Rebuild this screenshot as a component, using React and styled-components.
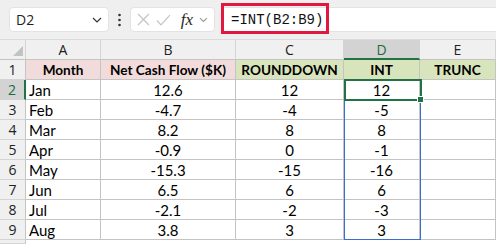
import React from 'react';
import styled, { createGlobalStyle } from 'styled-components';

const GlobalStyle = createGlobalStyle`
  html, body {
    margin: 0;
    padding: 0;
    background: #ffffff;
    overflow: hidden;
  }
`;

const Page = styled.div`
  width: 496px;
  height: 244px;
  display: flex;
  flex-direction: column;
  background: #ffffff;
`;

const TopBar = styled.div`
  height: 40px;
  flex: none;
  box-sizing: border-box;
  display: flex;
  align-items: center;
  padding-left: 9px;
  background: #efefef;
  border-bottom: 1px solid #dadada;
`;

const RoundBox = styled.div`
  height: 25px;
  box-sizing: border-box;
  background: #ffffff;
  border: 1px solid #e3e3e3;
  border-radius: 4px;
  display: flex;
  align-items: center;
`;

const NameBox = styled(RoundBox)`
  width: 100px;
  justify-content: space-between;
  padding: 0 6px 0 6px;
  font-family: "Open Sans", "Noto Sans", sans-serif;
  font-size: 14px;
  color: #1f1f1f;
`;

const Dots = styled.div`
  width: 21px;
  display: flex;
  justify-content: center;
`;

const FxBox = styled(RoundBox)`
  width: 85px;
  padding: 0 6px;
  gap: 6px;
`;

const FxLabel = styled.span`
  font-family: "Liberation Serif", "DejaVu Serif", serif;
  font-style: italic;
  font-size: 17px;
  color: #1f1f1f;
  margin-left: 4px;
`;

const FormulaBar = styled(RoundBox)`
  flex: 1;
  margin-left: 6px;
  border-radius: 0;
  border-right: none;
  position: relative;
  padding-left: 9px;
  font-family: "Liberation Mono", "DejaVu Sans Mono", monospace;
  font-size: 14px;
  color: #111111;
`;

const Highlight = styled.div`
  position: absolute;
  left: -1px;
  top: -5px;
  width: 108px;
  height: 31px;
  box-sizing: border-box;
  border: 3px solid #e2173f;
`;

const Sheet = styled.div`
  display: grid;
  grid-template-columns: 26px 75px 135px 108px 76px 76px;
  grid-template-rows: 20px repeat(9, 20px) 1fr;
  flex: 1;
  font-family: "Lato", "Open Sans", sans-serif;
  font-size: 15px;
  color: #000000;
`;

const Cell = styled.div`
  grid-column: ${p => p.$col};
  grid-row: ${p => p.$row};
  box-sizing: border-box;
  border-right: 1px solid #c4c4c4;
  border-bottom: 1px solid #c4c4c4;
  display: flex;
  align-items: center;
  justify-content: ${p => (p.$left ? 'flex-start' : 'center')};
  padding-left: ${p => (p.$left ? '3px' : '0')};
  background: ${p => p.$bg || '#ffffff'};
  font-weight: ${p => (p.$bold ? 700 : 400)};
  font-size: ${p => (p.$bold ? '13.6px' : '15px')};
  white-space: nowrap;
  overflow: hidden;
`;

const HeadCell = styled(Cell)`
  background: ${p => (p.$active ? '#d3d3d3' : '#f0f0f0')};
  border-right-color: #d4d4d4;
  border-bottom-color: #d4d4d4;
  font-family: "Open Sans", "Noto Sans", sans-serif;
  font-size: 14px;
  color: ${p => (p.$active ? '#1d6b3e' : '#222222')};
`;

const ColHead = styled(HeadCell)`
  border-bottom: ${p => (p.$active ? '2px solid #217346' : '1px solid #c4c4c4')};
`;

const RowHead = styled(HeadCell)`
  border-right: ${p => (p.$active ? '2px solid #217346' : '1px solid #c4c4c4')};
  border-bottom-color: #d4d4d4;
`;

const Corner = styled(HeadCell)`
  align-items: flex-end;
  justify-content: flex-end;
  padding: 0 2px 3px 0;
  border-bottom: 1px solid #c4c4c4;
`;

const Range = styled.div`
  grid-column: ${p => p.$col};
  grid-row: ${p => p.$rows};
  box-sizing: border-box;
  margin: 0 -1px 0 0;
  border: 1px solid #3a6fd0;
  pointer-events: none;
`;

const ActiveCell = styled.div`
  grid-column: ${p => p.$col};
  grid-row: ${p => p.$row};
  margin: -1px -2px -1px 0;
  border: 2px solid #217346;
  position: relative;
  pointer-events: none;
`;

const FillHandle = styled.span`
  position: absolute;
  right: -4px;
  bottom: -4px;
  width: 5px;
  height: 5px;
  background: #217346;
  border: 1px solid #ffffff;
`;

const PINK = '#f2dcdb';
const GREEN = '#d8e4bc';

const rows = [
  ['Jan', '12.6', '12', '12'],
  ['Feb', '-4.7', '-4', '-5'],
  ['Mar', '8.2', '8', '8'],
  ['Apr', '-0.9', '0', '-1'],
  ['May', '-15.3', '-15', '-16'],
  ['Jun', '6.5', '6', '6'],
  ['Jul', '-2.1', '-2', '-3'],
  ['Aug', '3.8', '3', '3'],
];

const Chevron = () => (
  <svg width="10" height="6" viewBox="0 0 10 6">
    <path d="M1 1l4 4 4-4" fill="none" stroke="#333" strokeWidth="1.2" />
  </svg>
);

export default function App() {
  return (
    <>
      <GlobalStyle />
      <Page>
        <TopBar>
          <NameBox>
            <span>D2</span>
            <Chevron />
          </NameBox>
          <Dots>
            <svg width="3" height="14" viewBox="0 0 3 14">
              <circle cx="1.5" cy="2" r="1.3" fill="#333" />
              <circle cx="1.5" cy="7" r="1.3" fill="#333" />
              <circle cx="1.5" cy="12" r="1.3" fill="#333" />
            </svg>
          </Dots>
          <FxBox>
            <svg width="13" height="13" viewBox="0 0 13 13">
              <path d="M1 1l11 11M12 1L1 12" stroke="#c4c4c4" strokeWidth="1.2" />
            </svg>
            <svg width="15" height="12" viewBox="0 0 15 12">
              <path d="M1 6.5l4 4.5L14 1" fill="none" stroke="#c4c4c4" strokeWidth="1.2" />
            </svg>
            <FxLabel>fx</FxLabel>
            <svg width="9" height="6" viewBox="0 0 9 6">
              <path d="M1 1l3.5 3.5L8 1" fill="none" stroke="#9a9a9a" strokeWidth="1.1" />
            </svg>
          </FxBox>
          <FormulaBar>
            <Highlight />
            =INT(B2:B9)
          </FormulaBar>
        </TopBar>

        <Sheet>
          <Corner $row={1} $col={1}>
            <svg width="10" height="10" viewBox="0 0 10 10">
              <path d="M10 0L10 10L0 10Z" fill="#c2c2c2" />
            </svg>
          </Corner>
          {['A', 'B', 'C', 'D', 'E'].map((c, i) => (
            <ColHead key={c} $row={1} $col={i + 2} $active={c === 'D'}>{c}</ColHead>
          ))}

          <RowHead $row={2} $col={1}>1</RowHead>
          <Cell $row={2} $col={2} $bg={PINK} $bold>Month</Cell>
          <Cell $row={2} $col={3} $bg={PINK} $bold>Net Cash Flow ($K)</Cell>
          <Cell $row={2} $col={4} $bg={GREEN} $bold>ROUNDDOWN</Cell>
          <Cell $row={2} $col={5} $bg={GREEN} $bold>INT</Cell>
          <Cell $row={2} $col={6} $bg={GREEN} $bold>TRUNC</Cell>

          {rows.map((r, i) => {
            const row = i + 3;
            return (
              <React.Fragment key={r[0]}>
                <RowHead $row={row} $col={1} $active={i === 0}>{i + 2}</RowHead>
                <Cell $row={row} $col={2} $left>{r[0]}</Cell>
                <Cell $row={row} $col={3}>{r[1]}</Cell>
                <Cell $row={row} $col={4}>{r[2]}</Cell>
                <Cell $row={row} $col={5}>{r[3]}</Cell>
                <Cell $row={row} $col={6} />
              </React.Fragment>
            );
          })}

          <RowHead $row={11} $col={1} />

          <Range $col={5} $rows="3 / 11" />
          <ActiveCell $col={5} $row={3}>
            <FillHandle />
          </ActiveCell>
        </Sheet>
      </Page>
    </>
  );
}
